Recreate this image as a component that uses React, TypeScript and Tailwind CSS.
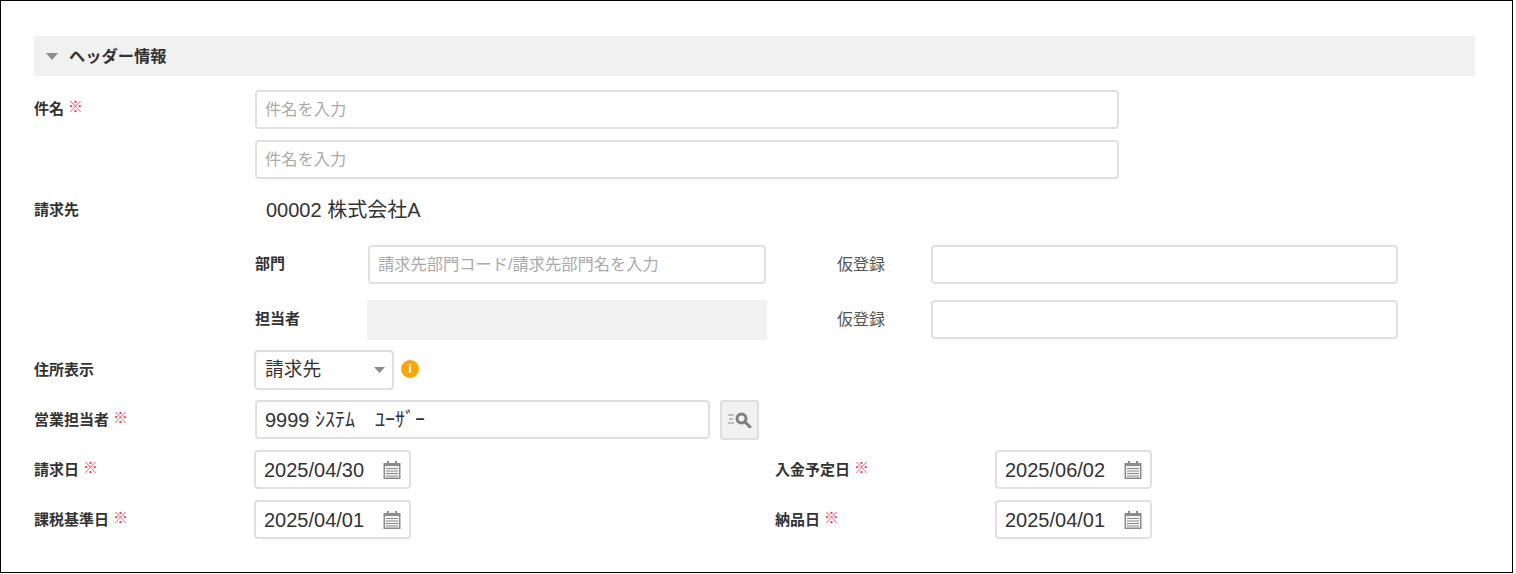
const fontStack = "font-['Liberation_Sans','Noto_Sans_CJK_JP',sans-serif]";

function Required() {
  return <span className="ml-[4px] relative top-[-2px] text-[15px] font-normal text-[#f0406c]">※</span>;
}

function Label({ text, required, width }: { text: string; required?: boolean; width: string }) {
  return (
    <div className={`${width} shrink-0 text-[15px] font-bold text-[#333]`}>
      {text}
      {required && <Required />}
    </div>
  );
}

function TextBox({ placeholder, value, className }: { placeholder?: string; value?: string; className: string }) {
  return (
    <div className={`${className} h-[39px] flex items-center px-[8px] bg-white border-2 border-[#e0e0e0] rounded-[4px] ${value ? "text-[20px] text-[#333]" : "text-[16.25px] text-[#aaa]"}`}>
      {value || placeholder}
    </div>
  );
}

function CalendarIcon() {
  return (
    <svg width="18" height="18" viewBox="0 0 18 18" className="shrink-0">
      <rect x="0.500" y="2" width="17" height="16" fill="#8c8c8c" />
      <rect x="4" y="0" width="2" height="3" fill="#8c8c8c" />
      <rect x="12" y="0" width="2" height="3" fill="#8c8c8c" />
      <rect x="2" y="5" width="14" height="11.500" fill="#f4f4f4" />
      <path d="M3 7.500h12M3 10h12M3 12.500h12M3 15h12" stroke="#8c8c8c" strokeWidth="1" />
    </svg>
  );
}

function DateBox({ value }: { value: string }) {
  return (
    <div className="w-[157px] h-[39px] mb-[1px] flex items-center justify-between pl-[8px] pr-[8px] bg-white border-2 border-[#e0e0e0] rounded-[4px] text-[20px] text-[#333]">
      {value}
      <CalendarIcon />
    </div>
  );
}

function DateRow({ left, leftValue, right, rightValue }: { left: string; leftValue: string; right: string; rightValue: string }) {
  return (
    <div className="h-[50px] flex items-center">
      <Label text={left} required width="w-[220px]" />
      <DateBox value={leftValue} />
      <div className="w-[364px] shrink-0" />
      <Label text={right} required width="w-[220px]" />
      <DateBox value={rightValue} />
    </div>
  );
}

function ContactRow({ label, disabled }: { label: string; disabled?: boolean }) {
  return (
    <div className={`${disabled ? "h-[53px]" : "h-[55px]"} pt-[8px] pl-[221px]`}>
      <div className="h-[39px] flex items-center">
        <Label text={label} width="w-[112px]" />
        <div className="w-[400px] shrink-0">
          {disabled ? (
            <div className="h-[40px] bg-[#f1f1f1] rounded-[2px]" />
          ) : (
            <TextBox placeholder="請求先部門コード/請求先部門名を入力" className="mx-[1px]" />
          )}
        </div>
        <div className="ml-[70px] w-[94px] shrink-0 text-[16px] text-[#555]">仮登録</div>
        <TextBox className="w-[467px]" />
      </div>
    </div>
  );
}

export default function App() {
  return (
    <div className={`${fontStack} w-[1513px] h-[573px] border border-black bg-white pt-[35px] pl-[33px]`}>
      <div className="w-[1441px] h-[40px] flex items-center bg-[#f1f1f1] pl-[12px]">
        <svg width="12" height="7" viewBox="0 0 12 7" className="mt-[1px]">
          <path d="M0 0h12L6 7z" fill="#8c8c8c" />
        </svg>
        <span className="ml-[11px] text-[16.25px] font-bold text-[#333]">ヘッダー情報</span>
      </div>

      <div className="h-[64px] pt-[14px] flex">
        <div className="pt-[8px]">
          <Label text="件名" required width="w-[221px]" />
        </div>
        <TextBox placeholder="件名を入力" className="w-[864px]" />
      </div>
      <div className="h-[39px] pl-[221px] flex">
        <TextBox placeholder="件名を入力" className="w-[864px]" />
      </div>

      <div className="h-[54px] flex items-center mt-[4px]">
        <Label text="請求先" width="w-[232px]" />
        <span className="text-[20px] text-[#333]">00002 株式会社A</span>
      </div>

      <ContactRow label="部門" />
      <ContactRow label="担当者" disabled />

      <div className="h-[50px] flex items-center">
        <Label text="住所表示" width="w-[220px]" />
        <div className="w-[140px] h-[40px] flex items-center justify-between pl-[9px] pr-[7px] bg-white border-2 border-[#e0e0e0] rounded-[4px] text-[18.750px] text-[#333]">
          請求先
          <svg width="11" height="6" viewBox="0 0 11 6">
            <path d="M0 0h11L5.500 6z" fill="#8c8c8c" />
          </svg>
        </div>
        <div className="ml-[7px] mb-[3px] w-[18px] h-[18px] rounded-full bg-[#ffa500] flex items-center justify-center text-[13px] font-bold text-white">
          i
        </div>
      </div>

      <div className="h-[50px] flex items-center">
        <Label text="営業担当者" required width="w-[221px]" />
        <TextBox value="9999 ｼｽﾃﾑ　ﾕｰｻﾞｰ" className="w-[455px] mb-[1px]" />
        <div className="ml-[10px] w-[39px] h-[40px] flex items-center justify-center bg-[#f1f1f1] border-2 border-[#e0e0e0] rounded-[3px]">
          <svg width="24" height="16" viewBox="0 0 24 16">
            <path d="M0 3h6M1 7h4M0 11h6" stroke="#8c8c8c" strokeWidth="1" />
            <circle cx="13.500" cy="6.500" r="4.500" fill="none" stroke="#808080" strokeWidth="3" />
            <path d="M17 10l5 5" stroke="#808080" strokeWidth="3" strokeLinecap="round" />
          </svg>
        </div>
      </div>

      <DateRow left="請求日" leftValue="2025/04/30" right="入金予定日" rightValue="2025/06/02" />
      <DateRow left="課税基準日" leftValue="2025/04/01" right="納品日" rightValue="2025/04/01" />
    </div>
  );
}
